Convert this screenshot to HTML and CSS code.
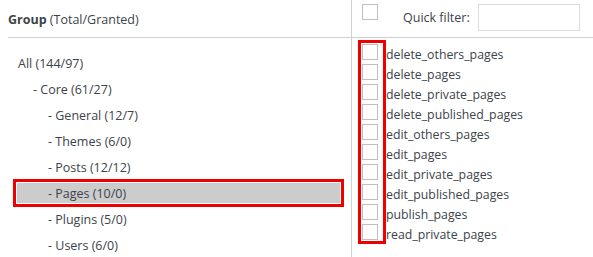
FILE: index.html
```html
<!DOCTYPE html>
<html lang="en">
<head>
    <meta charset="UTF-8">
    <title>Capabilities</title>
    <link rel="stylesheet" href="styles.css">
</head>
<body>
    <div class="panel">
        <div class="head head-left">
            <b>Group</b>&nbsp;(Total/Granted)
        </div>
        <div class="head head-right">
            <input type="checkbox" class="cb">
            <label class="filter-label" for="quick-filter">Quick filter:</label>
            <input type="text" id="quick-filter" class="filter-input">
        </div>

        <!-- Group tree -->
        <ul class="tree">
            <li class="lvl0">All (144/97)</li>
            <li class="lvl1">- Core (61/27)</li>
            <li class="lvl2">- General (12/7)</li>
            <li class="lvl2">- Themes (6/0)</li>
            <li class="lvl2">- Posts (12/12)</li>
            <li class="lvl2 selected">- Pages (10/0)</li>
            <li class="lvl2">- Plugins (5/0)</li>
            <li class="lvl2">- Users (6/0)</li>
        </ul>

        <!-- Capabilities of selected group -->
        <div class="caps">
            <label class="cap"><input type="checkbox" class="cb">delete_others_pages</label>
            <label class="cap"><input type="checkbox" class="cb">delete_pages</label>
            <label class="cap"><input type="checkbox" class="cb">delete_private_pages</label>
            <label class="cap"><input type="checkbox" class="cb">delete_published_pages</label>
            <label class="cap"><input type="checkbox" class="cb">edit_others_pages</label>
            <label class="cap"><input type="checkbox" class="cb">edit_pages</label>
            <label class="cap"><input type="checkbox" class="cb">edit_private_pages</label>
            <label class="cap"><input type="checkbox" class="cb">edit_published_pages</label>
            <label class="cap"><input type="checkbox" class="cb">publish_pages</label>
            <label class="cap"><input type="checkbox" class="cb">read_private_pages</label>
        </div>
    </div>
</body>
</html>
```

FILE: styles.css
```css
body {
    margin: 0;
    font-family: "Open Sans", "Noto Sans", sans-serif;
    font-size: 12px;
    color: #3c434a;
    background: #fff;
}

.panel {
    display: grid;
    grid-template-columns: 344px 1fr;
    grid-template-rows: 38px 1fr;
    height: 257px;
    margin-left: 8px;
}

.head {
    border-bottom: 1px solid #d0d0d0;
}

.head-left {
    border-right: 1px solid #d0d0d0;
    display: flex;
    align-items: center;
    padding-top: 1px;
    font-size: 12.5px;
}

.head-left b {
    font-weight: 700;
}

.head-right {
    display: flex;
    align-items: flex-start;
    padding-top: 4px;
}

.cb {
    appearance: none;
    -webkit-appearance: none;
    width: 16px;
    height: 16px;
    margin: 0;
    border: 1px solid #bfbfbf;
    background: #fff;
    flex-shrink: 0;
}

.head-right .cb {
    margin-left: 10px;
}

.filter-label {
    margin-left: 25px;
    line-height: 28px;
    font-size: 12.5px;
}

.filter-input {
    width: 102px;
    height: 27px;
    box-sizing: border-box;
    margin: 0 0 0 8px;
    border: 1px solid #dcdcdc;
    background: #fff;
}

.tree {
    list-style: none;
    margin: 0;
    padding: 15px 11px 0 9px;
    border-right: 1px solid #d0d0d0;
    display: flex;
    flex-direction: column;
    gap: 6px;
}

.tree li {
    height: 20px;
    line-height: 21px;
    font-size: 12.5px;
}

.tree .lvl0 { padding-left: 1px; }
.tree .lvl1 { padding-left: 16px; }
.tree .lvl2 { padding-left: 31px; }

.tree .selected {
    background: #cccccc;
    outline: 3px solid #ee0000;
    outline-offset: 1px;
}

.caps {
    position: relative;
    display: flex;
    flex-direction: column;
    padding-top: 4px;
    font-size: 12.3px;
}

/* highlight box around the checkbox column */
.caps::before {
    content: "";
    position: absolute;
    left: 6px;
    top: 2px;
    width: 22px;
    height: 198px;
    border: 3px solid #ee0000;
}

.cap {
    display: flex;
    align-items: flex-start;
    height: 20px;
    line-height: 26px;
}

.cap .cb {
    margin: 2px 8px 0 10px;
}
```
